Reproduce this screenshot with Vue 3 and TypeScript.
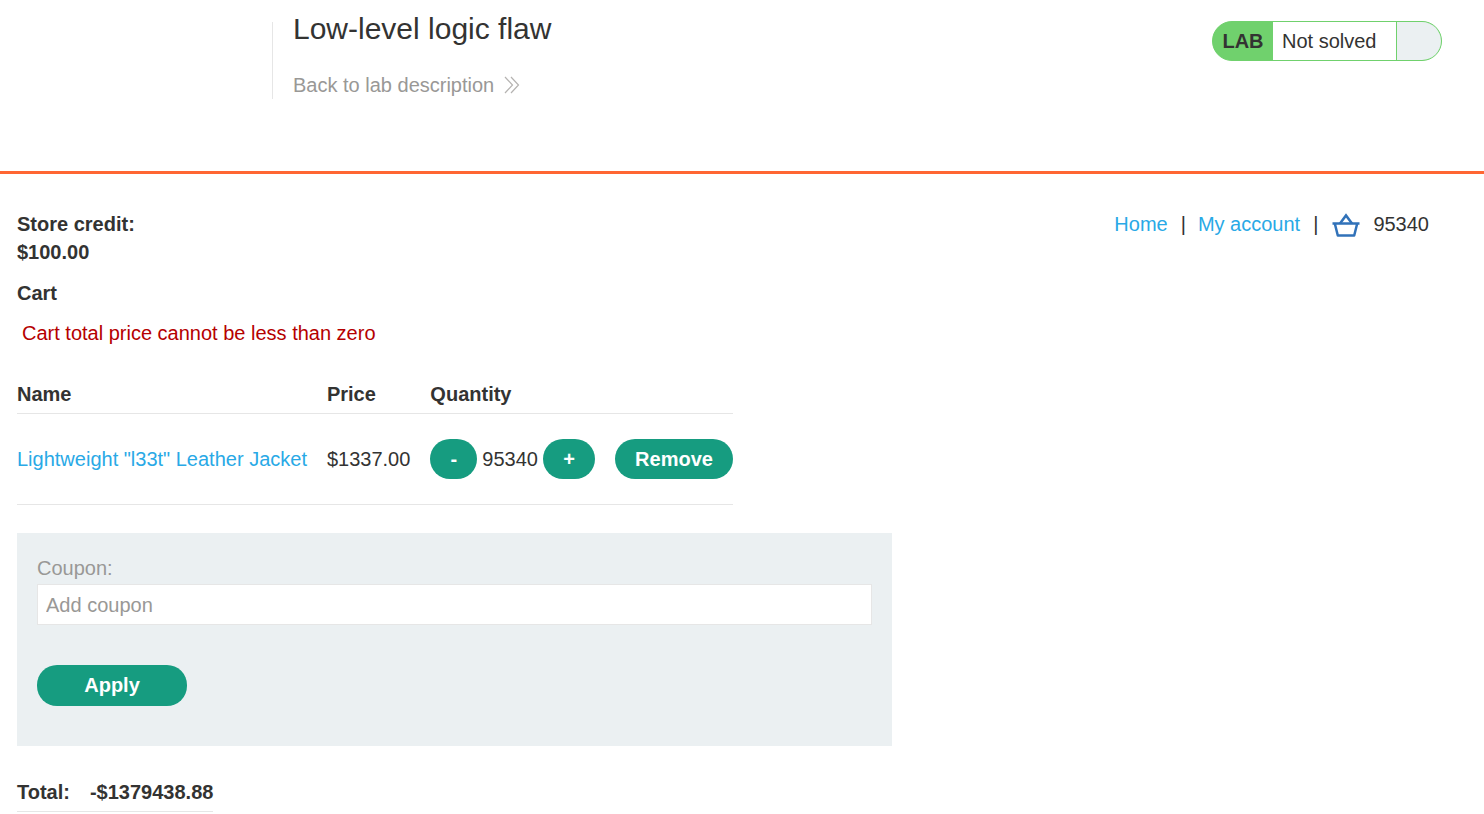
<script setup lang="ts">
import { ref } from 'vue'

const quantity = ref(95340)
const coupon = ref('')
</script>

<template>
  <div class="page">
    <header class="lab-header">
      <div class="title-block">
        <h2>Low-level logic flaw</h2>
        <a class="back" href="#">
          Back to lab description
          <svg class="chevrons" viewBox="0 0 16 18" width="16" height="18" fill="none" stroke="#b5b3b1" stroke-width="1.2">
            <path d="M1 1l7.5 8L1 17" />
            <path d="M7 1l7.5 8L7 17" />
          </svg>
        </a>
      </div>
      <div class="status">
        <span class="status-lab">LAB</span>
        <span class="status-text">Not solved</span>
        <span class="status-end"></span>
      </div>
    </header>

    <main class="content">
      <nav class="top-links">
        <a href="#">Home</a>
        <span class="sep first">|</span>
        <a href="#">My account</a>
        <span class="sep second">|</span>
        <svg class="cart" viewBox="0 0 28 24" width="28" height="24" fill="none" stroke="#3172b9" stroke-width="2.5">
          <path d="M0.5 10.5h27M2.8 10.5l3 12h16.4l3-12" stroke-linejoin="round" />
          <path d="M8 10.5L14 2.4l6 8.1" />
        </svg>
        <span class="cart-count">{{ quantity }}</span>
      </nav>

      <p class="credit">Store credit:<br />$100.00</p>
      <p class="cart-title">Cart</p>
      <p class="error">Cart total price cannot be less than zero</p>

      <table class="cart-table">
        <thead>
          <tr>
            <th>Name</th>
            <th>Price</th>
            <th>Quantity</th>
          </tr>
        </thead>
        <tbody>
          <tr>
            <td class="name-cell"><a href="#">Lightweight "l33t" Leather Jacket</a></td>
            <td>$1337.00</td>
            <td>
              <div class="qty">
                <button class="btn minus">-</button>
                <span class="qty-value">{{ quantity }}</span>
                <button class="btn plus">+</button>
                <button class="btn remove">Remove</button>
              </div>
            </td>
          </tr>
        </tbody>
      </table>

      <form class="coupon" @submit.prevent>
        <label for="coupon">Coupon:</label>
        <input id="coupon" v-model="coupon" placeholder="Add coupon" />
        <button class="btn apply">Apply</button>
      </form>

      <div class="total">
        <span>Total:</span>
        <span>-$1379438.88</span>
      </div>
    </main>
  </div>
</template>

<style>
html, body {
  margin: 0;
  background: #fff;
}
</style>

<style scoped>
.page {
  font-family: "Liberation Sans", Arial, sans-serif;
  font-size: 20px;
  color: #333332;
  line-height: 28px;
}

.lab-header {
  height: 171px;
  box-sizing: border-box;
  display: flex;
  justify-content: space-between;
  align-items: flex-start;
  padding: 0 42px 0 272px;
  position: relative;
}

.lab-header::after {
  content: "";
  position: absolute;
  left: 0;
  right: 0;
  top: 171px;
  height: 3px;
  background: #ff6633;
}

.title-block {
  margin-top: 22px;
  height: 77px;
  border-left: 1px solid #e6e6e6;
  padding-left: 20px;
}

h2 {
  margin: -8px 0 0;
  font-size: 30px;
  font-weight: 400;
  line-height: 30px;
}

.back {
  display: inline-flex;
  align-items: center;
  gap: 10px;
  margin-top: 27px;
  color: #999896;
  text-decoration: none;
}

.status {
  margin-top: 21px;
  width: 230px;
  height: 40px;
  box-sizing: border-box;
  display: flex;
  border: 1px solid #70d16d;
  border-radius: 20px;
  overflow: hidden;
  background: #70d16d;
}

.status-lab {
  width: 60px;
  flex: none;
  background: #70d16d;
  font-weight: 700;
  text-align: center;
  line-height: 38px;
}

.status-text {
  width: 124px;
  flex: none;
  padding-left: 9px;
  box-sizing: border-box;
  line-height: 38px;
  background: #fff;
  border-right: 1px solid #70d16d;
}

.status-end {
  flex: 1;
  background: #ebf0f2;
}

.content {
  padding: 39px 17px 0;
}

.top-links {
  float: right;
  display: flex;
  align-items: center;
  margin: 0 38px 0 0;
}

.top-links a,
.name-cell a {
  color: #29a9e6;
  text-decoration: none;
}

.sep {
  margin: 0 13px;
  color: #333332;
}

.sep.first {
  margin-right: 12px;
}

.sep.second {
  margin-right: 14px;
}

.cart {
  margin: 2px 13px 0 0;
}

p {
  margin: 0;
}

.credit,
.cart-title {
  font-weight: 700;
}

.cart-title {
  margin-top: 13px;
}

.error {
  margin-top: 12px;
  padding-left: 5px;
  color: #b50000;
}

.cart-table {
  margin-top: 21px;
  border-collapse: collapse;
}

th {
  text-align: left;
  font-weight: 700;
  padding: 12px 20px 5px 0;
  border-bottom: 1px solid #e6e6e6;
}

td {
  padding: 25px 20px 25px 0;
  border-bottom: 1px solid #e6e6e6;
}

th:last-child,
td:last-child {
  padding-right: 0;
}

.qty {
  display: flex;
  align-items: center;
}

.btn {
  height: 40px;
  border: 0;
  border-radius: 20px;
  background: #169c80;
  color: #fff;
  font: 700 20px "Liberation Sans", Arial, sans-serif;
  padding: 0;
}

.minus {
  width: 47px;
}

.qty-value {
  margin: 0 5px;
}

.plus {
  width: 52px;
}

.remove {
  width: 118px;
  margin-left: 20px;
}

.coupon {
  margin-top: 28px;
  width: 875px;
  height: 213px;
  box-sizing: border-box;
  padding: 21px 20px 0;
  background: #ebf0f2;
  display: flex;
  flex-direction: column;
  align-items: flex-start;
}

label {
  color: #999896;
}

input {
  width: 835px;
  height: 41px;
  box-sizing: border-box;
  margin-top: 2px;
  padding: 2px 8px 0;
  border: 1px solid #e6e6e6;
  background: #fff;
  font: 20px "Liberation Sans", Arial, sans-serif;
  color: #333332;
}

input::placeholder {
  color: #999896;
  opacity: 1;
}

.apply {
  width: 150px;
  height: 41px;
  margin-top: 40px;
}

.total {
  display: inline-flex;
  gap: 20px;
  margin-top: 32px;
  font-weight: 700;
  border-bottom: 1px solid #e6e6e6;
  padding-bottom: 5px;
}
</style>
